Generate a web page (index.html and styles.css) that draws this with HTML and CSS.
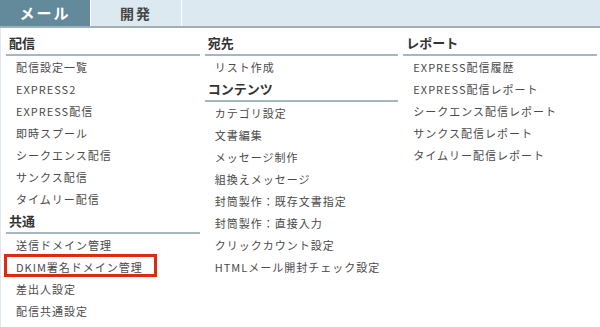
FILE: index.html
```html
<!DOCTYPE html>
<html lang="ja">

<head>
  <meta charset="UTF-8">
  <meta name="viewport" content="width=device-width, initial-scale=1.0">
  <title>メニュー</title>
  <link rel="stylesheet" href="styles.css">
</head>

<body>

  <div class="tabs">
    <a class="tab active" href="#">メール</a>
    <a class="tab" href="#">開発</a>
  </div>

  <div class="menu">
    <div class="column">
      <h2>配信</h2>
      <ul>
        <li><a href="#">配信設定一覧</a></li>
        <li><a href="#">EXPRESS2</a></li>
        <li><a href="#">EXPRESS配信</a></li>
        <li><a href="#">即時スプール</a></li>
        <li><a href="#">シークエンス配信</a></li>
        <li><a href="#">サンクス配信</a></li>
        <li><a href="#">タイムリー配信</a></li>
      </ul>
      <h2>共通</h2>
      <ul>
        <li><a href="#">送信ドメイン管理</a></li>
        <li class="marked"><a href="#">DKIM署名ドメイン管理</a></li>
        <li><a href="#">差出人設定</a></li>
        <li><a href="#">配信共通設定</a></li>
      </ul>
    </div>

    <div class="column">
      <h2>宛先</h2>
      <ul>
        <li><a href="#">リスト作成</a></li>
      </ul>
      <h2>コンテンツ</h2>
      <ul>
        <li><a href="#">カテゴリ設定</a></li>
        <li><a href="#">文書編集</a></li>
        <li><a href="#">メッセージ制作</a></li>
        <li><a href="#">組換えメッセージ</a></li>
        <li><a href="#">封筒製作：既存文書指定</a></li>
        <li><a href="#">封筒製作：直接入力</a></li>
        <li><a href="#">クリックカウント設定</a></li>
        <li><a href="#">HTMLメール開封チェック設定</a></li>
      </ul>
    </div>

    <div class="column">
      <h2>レポート</h2>
      <ul>
        <li><a href="#">EXPRESS配信履歴</a></li>
        <li><a href="#">EXPRESS配信レポート</a></li>
        <li><a href="#">シークエンス配信レポート</a></li>
        <li><a href="#">サンクス配信レポート</a></li>
        <li><a href="#">タイムリー配信レポート</a></li>
      </ul>
    </div>
  </div>

</body>

</html>
```

FILE: styles.css
```css
body {
  font-family: "Noto Sans CJK JP", "Noto Sans", sans-serif;
  margin: 0;
  background-color: #ffffff;
  color: #444444;
  height: 327px;
  overflow: hidden;
}

.tabs {
  display: flex;
  height: 26px;
  background-color: #dce9f0;
  border-bottom: 2px solid #9fb0b8;
}

.tab {
  width: 90px;
  border-right: 1px solid #ffffff;
  text-align: center;
  line-height: 26px;
  font-size: 14px;
  font-weight: bold;
  letter-spacing: 2px;
  color: #444444;
  text-decoration: none;
}

.tab.active {
  background-color: #628a9a;
  color: #ffffff;
  font-size: 15px;
}

.menu {
  display: flex;
  gap: 5px;
  padding: 4px 3px 0 5px;
  border-left: 1px solid #dce9f0;
  height: 295px;
}

.column {
  flex: 1;
}

h2 {
  margin: 0;
  padding-left: 3px;
  height: 22px;
  line-height: 22px;
  font-size: 13px;
  font-weight: bold;
  color: #333333;
  border-bottom: 2px solid #a5b7c0;
}

ul {
  list-style: none;
  margin: 0;
  padding: 0;
}

li {
  height: 18px;
  line-height: 18px;
  padding-bottom: 4px;
  padding-left: 10px;
}

li a {
  font-size: 11px;
  letter-spacing: 1px;
  color: #4a4a4a;
  text-decoration: none;
}

/* 強調枠 */
.marked {
  box-sizing: border-box;
  margin: -2px 0 1px -2px;
  width: 153px;
  height: 23px;
  line-height: 16px;
  padding: 0 0 1px 9px;
  border: 3px solid #de2a10;
}
```
